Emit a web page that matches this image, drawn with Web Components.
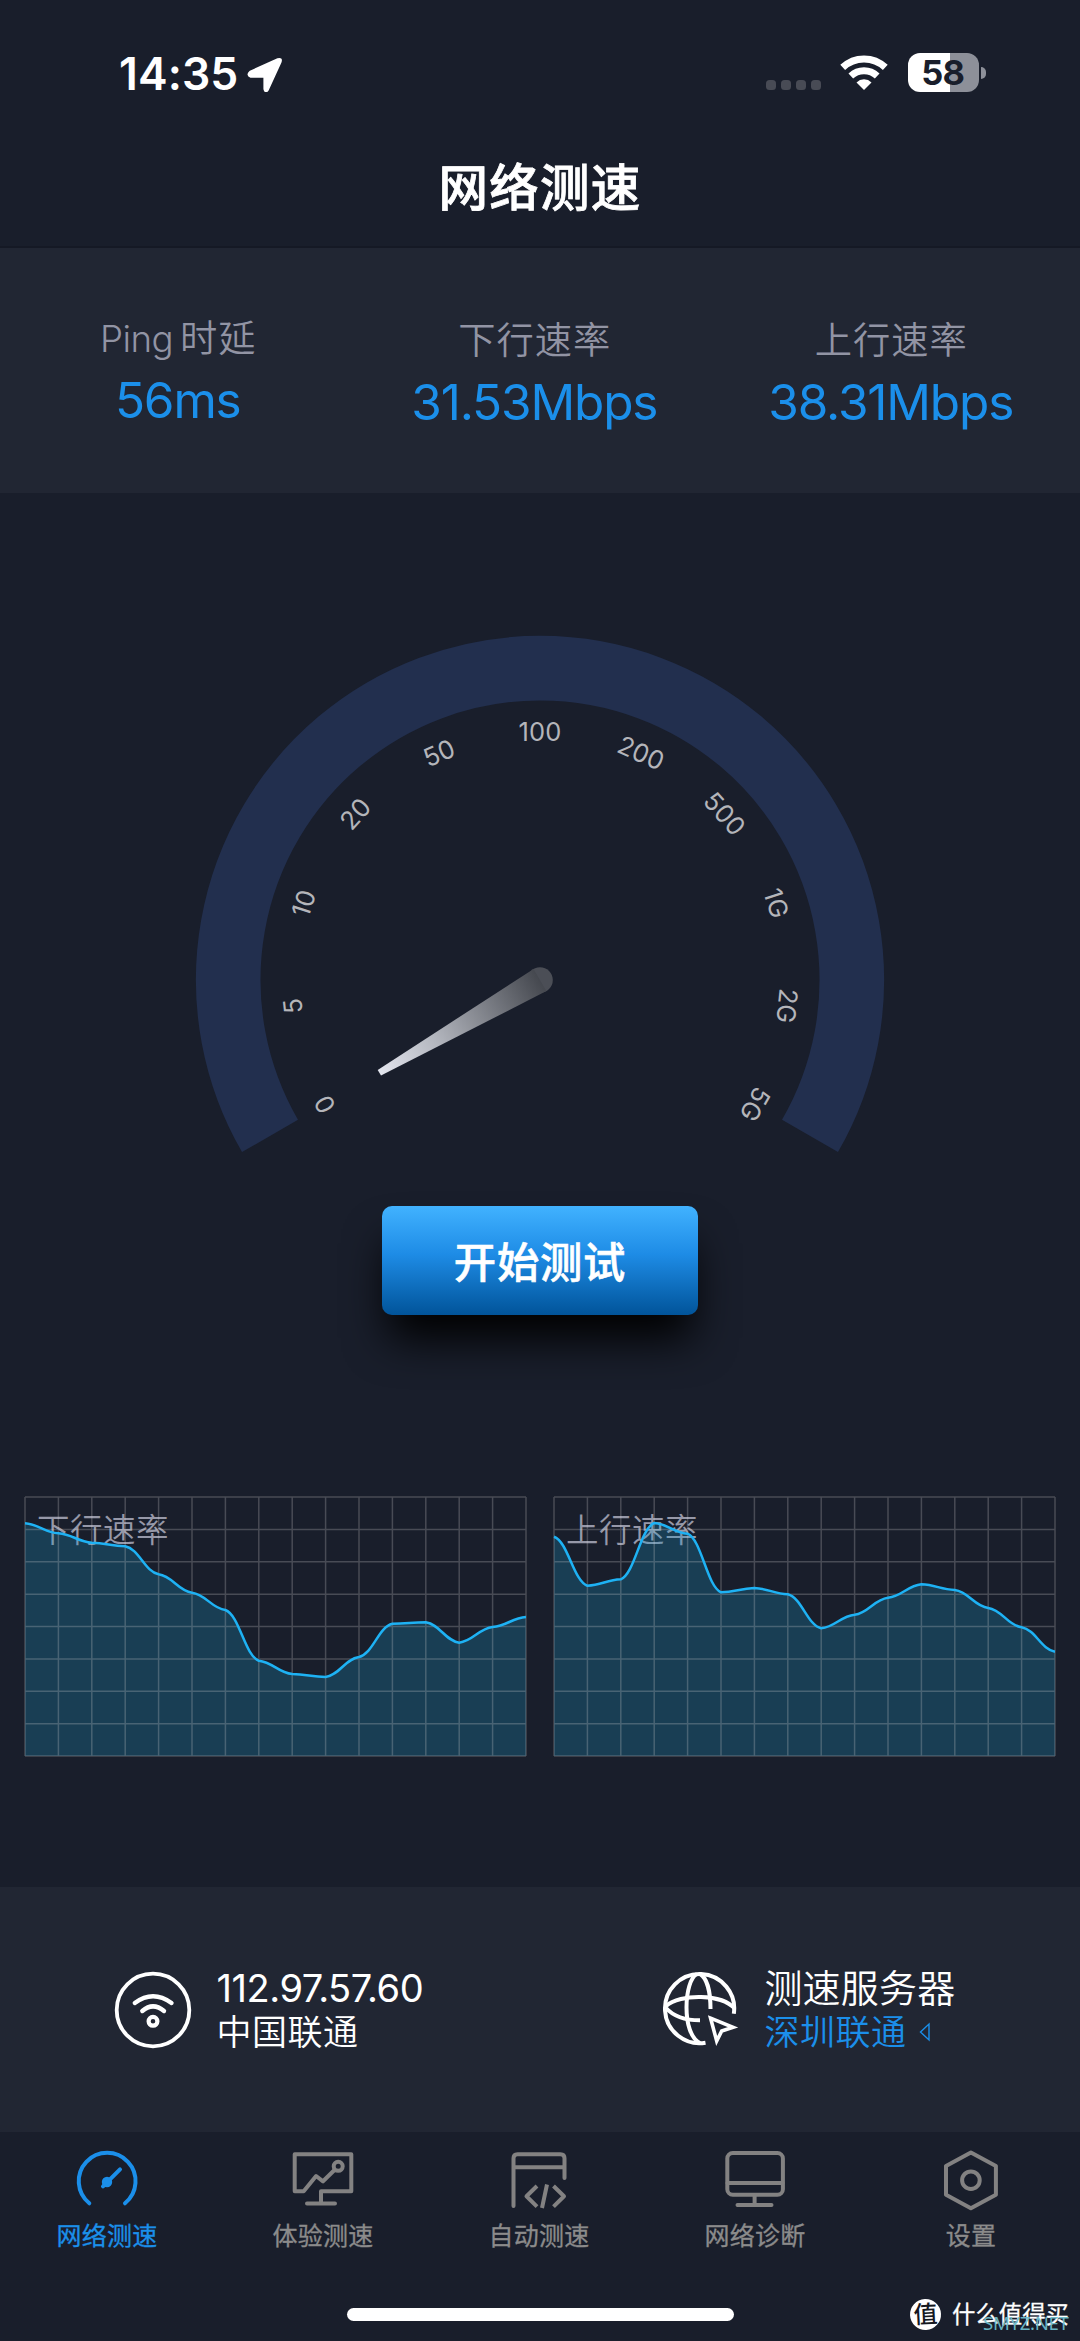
<!DOCTYPE html>
<html lang="zh-CN">
<head>
<meta charset="utf-8">
<title>网络测速</title>
<style>
html,body{margin:0;padding:0;background:#191e2b}
body{width:1080px;height:2341px;overflow:hidden;font-family:Inter,"Noto Sans CJK SC",sans-serif;color:#fff}
</style>
</head>
<body>
<speed-app></speed-app>
<script>
const define = (name, html, init) => customElements.define(name, class extends HTMLElement {
  constructor() {
    super();
    const t = document.createElement('template');
    t.innerHTML = html;
    this.attachShadow({ mode: 'open' }).append(t.content.cloneNode(true));
  }
  connectedCallback() { if (init) init(this, this.shadowRoot); }
});

define('status-bar', `
<style>
:host{display:flex;height:148px;align-items:center;justify-content:space-between;padding:0 94px 0 119px}
.l,.r{display:flex;align-items:center}
.time{font-size:44.5px;font-weight:600;line-height:60px;letter-spacing:.1px}
svg{display:block}
.loc{margin-left:8.5px}
.dots{display:flex;gap:5px;margin:25px 18px 0 0}
.dots i{width:10px;height:10px;border-radius:3.5px;background:#484b55}
.bat{margin-left:18.5px;width:71.5px;height:38.5px;border-radius:12px;background:linear-gradient(90deg,#fff 41.5px,#8d9099 41.5px);color:#191e2b;font-size:34.5px;font-weight:700;line-height:39px;text-align:center;letter-spacing:-.8px;text-indent:-1px}
.nub{width:5px;height:12px;border-radius:0 6px 6px 0;background:#8d9099;margin-left:2px}
.r{margin-top:-3px}
</style>
<div class="l"><span class="time">14:35</span>
<svg class="loc" width="36" height="36" viewBox="247.5 55.5 36 36"><path d="M251 71.5 278.5 59.2Q281.8 58 280.6 61.3L268 89Q266.2 92 265.4 88.5V75.8H251.5Q247.8 74.4 251 71.5Z" fill="#fff" stroke="#fff" stroke-width="3" stroke-linejoin="round"/></svg></div>
<div class="r"><span class="dots"><i></i><i></i><i></i><i></i></span>
<svg width="50" height="37" viewBox="-25 -36 50 37"><g fill="none" stroke="#fff"><path d="M-21.3-22.6A31 31 0 0 1 21.3-22.6" stroke-width="7"/><path d="M-13.2-14A19.2 19.2 0 0 1 13.2-14" stroke-width="6.8"/></g><path d="M0 0-7.5-7.6A10.7 10.7 0 0 1 7.5-7.6Z" fill="#fff"/></svg>
<span class="bat">58</span><i class="nub"></i></div>`);

define('page-title', `
<style>:host{display:block;height:100px;box-sizing:border-box;border-bottom:2px solid #151925;text-align:center;font-size:49.5px;font-weight:500;-webkit-text-stroke:.8px #fff;line-height:81px;letter-spacing:1.2px}</style><slot></slot>`);

define('stat-item', `
<style>
:host{display:flex;flex-direction:column;align-items:center;width:356.5px;padding-top:65px;box-sizing:border-box}
:host([raised]){padding-top:62.5px}
.k{font-size:37.3px;line-height:55px;color:#9294a4;letter-spacing:1px;font-weight:350}
::slotted(.latin){letter-spacing:-.5px;font-size:36.7px;word-spacing:-3px}
.v{font-size:49.5px;line-height:69px;color:#1b8fea;letter-spacing:-1.15px;margin-right:1px}
</style><span class="k"><slot></slot></span><span class="v"><slot name="value"></slot></span>`);

define('stats-panel', `<style>:host{display:flex;height:245px;background:#212633}</style><slot></slot>`);

define('speed-gauge', `
<style>:host{display:block;margin-top:137px}svg{display:block}text{font-size:25.5px;fill:#b4b5ba;text-anchor:middle;letter-spacing:.1px}</style>
<svg width="700" height="530" viewBox="-350 -350 700 530">
<defs><linearGradient id="n" gradientUnits="userSpaceOnUse" x1="-185" y1="0" x2="0" y2="0"><stop offset="0" stop-color="#e3e5ee"/><stop offset=".35" stop-color="#b3b6be"/><stop offset="1" stop-color="#45484f"/></linearGradient></defs>
<path d="M-270 155.9A311.8 311.8 0 1 1 270 155.9" fill="none" stroke="#222f4e" stroke-width="64.6"/>
<g id="labels"></g>
<circle r="12.8" fill="#4b4e56"/>
<path transform="rotate(-30)" d="M-185.5-3.3 0-12.8V12.8L-185.5 3.3Z" fill="url(#n)"/>
</svg>`, (h, r) => {
  r.querySelector('#labels').innerHTML = ['0','5','10','20','50','100','200','500','1G','2G','5G']
    .map((t, i) => `<text transform="rotate(${-120 + 24 * i})" y="-239.3">${t}</text>`).join('');
});

define('start-button', `
<style>:host{display:block;margin-top:46px}
button{display:block;width:316px;height:109px;border:0;border-radius:10px;padding:0;color:#fff;font:500 42.3px/113px Inter,"Noto Sans CJK SC",sans-serif;-webkit-text-stroke:.6px #fff;letter-spacing:.8px;
background:linear-gradient(#41b2ff,#1e8ce6 44%,#01549a);box-shadow:0 30px 44px -7px #000}</style>
<button><slot></slot></button>`);

define('rate-chart', `
<style>:host{display:block}svg{display:block;overflow:visible}text{font-size:32.5px;fill:#9698a8;letter-spacing:.5px;font-weight:350}</style>
<svg width="501" height="260" viewBox="0 0 501 260"><g id="p"></g></svg>`, (h, r) => {
  const W = 501, H = 259, n = 15, w = W / n;
  const y = h.getAttribute('points').split(',').map(Number);
  let d = `M0 ${y[0]}`;
  for (let i = 0; i < n; i++) {
    const a = y[i], b = y[i + 1], k = (b - a) * .1;
    d += `C${(i + .42) * w} ${a + k} ${(i + .58) * w} ${b - k} ${(i + 1) * w} ${b}`;
  }
  let g = '';
  for (let i = 0; i <= n; i++) g += `M${i * w} 0V${H}`;
  for (let i = 0; i <= 8; i++) g += `M0 ${i * H / 8}H${W}`;
  r.querySelector('#p').innerHTML = `<text x="12" y="45.3">${h.getAttribute('label')}</text>
    <path d="${d}L${W} ${H}H0Z" fill="#1c9acb" fill-opacity=".26"/>
    <path d="${g}" stroke="#d8d2d2" stroke-opacity=".25" stroke-width="1.5" fill="none"/>
    <path d="${d}" fill="none" stroke="#1eb2f4" stroke-width="2.5"/>`;
});

define('chart-row', `<style>:host{display:flex;gap:28px;margin-top:182px}</style><slot></slot>`);

define('test-area', `<style>:host{display:flex;flex-direction:column;align-items:center;height:1394px}</style><slot></slot>`);

define('info-panel', `<style>:host{display:flex;height:245px;background:#212633}</style><slot></slot>`);

define('info-item', `
<style>
:host{display:flex;box-sizing:border-box;padding-top:81px;width:549px;padding-left:112px}
:host([link]){padding-left:121px}
.t{display:flex;flex-direction:column;margin-left:22.5px}
:host([link]) .t{margin-left:21.5px}
.a{font-size:38px;line-height:40px;letter-spacing:-.45px}
:host([link]) .a{letter-spacing:.2px;font-weight:350}
.b{display:flex;align-items:center;font-size:35px;line-height:46px;margin-top:1px;letter-spacing:.5px;font-weight:350}
:host([link]) .b{color:#1b8fea}
::slotted(svg){display:block;margin-left:13px}
</style>
<slot name="icon"></slot><div class="t"><span class="a"><slot></slot></span><span class="b"><slot name="sub"></slot><slot name="mark"></slot></span></div>`);

define('info-icon', `<style>:host{display:block;width:82px;height:82px}svg{display:block}</style><svg width="82" height="82" fill="none" stroke="#fff"></svg>`, (h, r) => {
  const s = r.querySelector('svg');
  if (h.getAttribute('kind') === 'wifi') {
    s.setAttribute('viewBox', '112 1968 82 82');
    s.innerHTML = `<circle cx="153" cy="2010" r="36.3" stroke-width="3.8"/><g stroke-width="4.4" stroke-linecap="round"><path d="M134.8 2003Q153 1989.5 171.5 2003M142.3 2011Q153 2001.7 164 2011"/></g><circle cx="153" cy="2021.3" r="4.4" stroke-width="4.2"/>`;
  } else {
    s.setAttribute('viewBox', '661 1968 82 82');
    s.innerHTML = `<g stroke-width="4"><path d="M705.5 2042.7A34.6 34.6 0 1 1 733.8 2013.8"/>
    <path d="M666 2006C680 1993.5 722 1993.5 734.5 2008.5M666 2008C674 2017 686 2020.3 700 2020.3"/>
    <path d="M697 1974C684 1980 681 2034 700 2043M700 1974C707 1978 710.5 1992 710.5 2009"/></g>
    <path d="M710.6 2018.2 733 2027.3 721.7 2031 716.7 2041Z" stroke-width="3.6"/>`;
  }
});

const ICONS = {
  gauge: ['75 2148 66 66', `<path d="M89.3 2203.3A28.4 28.4 0 1 1 125 2203.3M103 2186.3 120 2169.3"/><circle cx="107" cy="2182" r="5.2" fill="currentColor" stroke="none"/>`],
  trend: ['291 2148 66 66', `<path d="M321 2203V2191.3H351.3V2154.3H294.7V2191.3H303.7L316.1 2176 323 2181.3 334.5 2170"/><circle cx="338.2" cy="2166.3" r="4.5"/><path d="M307 2203.6H335"/>`],
  code: ['507 2148 66 66', `<path d="M513.5 2206V2158.3Q513.5 2154.3 517.5 2154.3H560.5Q564.5 2154.3 564.5 2158.3V2178M514 2167.3H564"/><path stroke-linecap="butt" d="M537 2186 526.5 2196.3 537 2206.6M547 2184.5 542 2208M553.5 2186 564 2196.3 553.5 2206.6"/>`],
  monitor: ['723 2148 66 66', `<rect x="727.3" y="2153" width="55.6" height="41.8" rx="5.5"/><path d="M727.5 2183H782.5M754.6 2195V2205M737.5 2205H771.5"/>`],
  hex: ['939 2148 66 66', `<path d="M970.9 2152.5 995.9 2166V2194.8L970.9 2208.3 946 2194.8V2166Z"/><circle cx="970.9" cy="2180.2" r="8.8"/>`]
};
define('tab-item', `
<style>:host{display:flex;flex-direction:column;align-items:center;width:216px;padding-top:16px;color:#8b8b8b}
:host([active]){color:#1b8fea;--i:#1b8fea}
svg{display:block;color:var(--i,#838282)}span{font-size:25px;line-height:45px;letter-spacing:.3px;margin-right:2px;-webkit-text-stroke:.3px currentColor}</style>
<svg width="66" height="66" fill="none" stroke="currentColor" stroke-width="4" stroke-linecap="round" stroke-linejoin="round"></svg><span><slot></slot></span>`, (h, r) => {
  const [vb, body] = ICONS[h.getAttribute('icon')], s = r.querySelector('svg');
  s.setAttribute('viewBox', vb); s.innerHTML = body;
});

define('tab-bar', `<style>:host{display:flex;height:176px;box-sizing:border-box}</style><slot></slot>`);

define('home-strip', `
<style>
:host{display:block;position:relative;height:33px}
.bar{width:387px;height:12.5px;border-radius:7px;background:#fff;margin:0 auto}
.wm{position:absolute;left:910px;top:-10px;display:flex;align-items:center;height:32px}
.logo{width:31px;height:31px;border-radius:50%;background:#fff;color:#15181f;font-size:24px;font-weight:500;line-height:31px;text-align:center;transform:rotate(-3deg)}
.name{margin-left:11px;font-size:23.4px;font-weight:400;line-height:33px;white-space:nowrap;-webkit-text-stroke:.3px #fff}
.net{position:absolute;left:983px;top:2.5px;font:18.6px/24px "Noto Sans",sans-serif;color:#6dbccb;opacity:.95;letter-spacing:-.3px}
</style>
<div class="bar"></div><div class="wm"><span class="logo">值</span><span class="name">什么值得买</span></div><span class="net">SMYZ.NET</span>`);

define('speed-app', `
<style>:host{display:flex;flex-direction:column;width:1080px;height:2341px;background:#191e2b}</style>
<status-bar></status-bar>
<page-title>网络测速</page-title>
<stats-panel>
<stat-item raised><span class="latin">Ping </span>时延<span slot="value">56ms</span></stat-item>
<stat-item>下行速率<span slot="value">31.53Mbps</span></stat-item>
<stat-item>上行速率<span slot="value">38.31Mbps</span></stat-item>
</stats-panel>
<test-area>
<speed-gauge></speed-gauge>
<start-button>开始测试</start-button>
<chart-row>
<rate-chart label="下行速率" points="26.3,36.3,45.7,49.3,77.3,95.7,113,163.7,177,180,160,126.7,125.3,145.7,130,120"></rate-chart>
<rate-chart label="上行速率" points="39.7,88.7,82.3,26,36.7,95.3,91,97.3,131.3,117.7,100.7,87.3,93,111,130.3,154.7"></rate-chart>
</chart-row>
</test-area>
<info-panel>
<info-item><info-icon slot="icon" kind="wifi"></info-icon>112.97.57.60<span slot="sub">中国联通</span></info-item>
<info-item link><info-icon slot="icon" kind="globe"></info-icon>测速服务器<span slot="sub">深圳联通</span><svg slot="mark" width="12" height="20" viewBox="0 0 12 20"><path d="M10 2V18L1.5 10Z" fill="none" stroke="#1b8fea" stroke-width="1.4"/></svg></info-item>
</info-panel>
<tab-bar>
<tab-item icon="gauge" active>网络测速</tab-item>
<tab-item icon="trend">体验测速</tab-item>
<tab-item icon="code">自动测速</tab-item>
<tab-item icon="monitor">网络诊断</tab-item>
<tab-item icon="hex">设置</tab-item>
</tab-bar>
<home-strip></home-strip>`);
</script>
</body>
</html>
